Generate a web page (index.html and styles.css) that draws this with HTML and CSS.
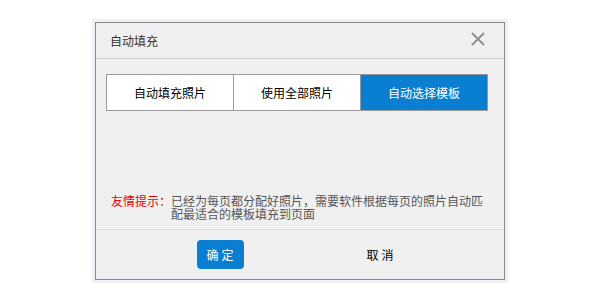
FILE: index.html
```html
<!DOCTYPE html>
<html lang="zh-CN">
<head>
    <meta charset="UTF-8">
    <meta name="viewport" content="width=device-width, initial-scale=1.0">
    <title>自动填充</title>
    <link rel="stylesheet" href="styles.css">
</head>
<body>
    <div class="frame">
        <div class="dialog">
            <div class="header">
                <span class="title">自动填充</span>
                <a href="#" class="close">
                    <svg width="14" height="14" viewBox="0 0 14 14">
                        <path d="M1 1 L13 13 M13 1 L1 13" stroke="#8c8c8c" stroke-width="1.8" fill="none"/>
                    </svg>
                </a>
            </div>
            <div class="body">
                <div class="tabs">
                    <div class="tab">自动填充照片</div>
                    <div class="tab">使用全部照片</div>
                    <div class="tab active">自动选择模板</div>
                </div>
                <div class="tip">
                    <span class="tip-label">友情提示：</span>
                    <span class="tip-text">已经为每页都分配好照片，需要软件根据每页的照片自动匹配最适合的模板填充到页面</span>
                </div>
            </div>
            <div class="footer">
                <a href="#" class="button primary">确定</a>
                <a href="#" class="button">取消</a>
            </div>
        </div>
    </div>
</body>
</html>
```

FILE: styles.css
```css
body {
    font-family: "Noto Sans CJK SC", "Liberation Sans", sans-serif;
    font-size: 12px;
    background-color: #FFFFFF;
    color: #000000;
    margin: 0;
    padding: 0;
}
a {
    text-decoration: none;
    color: inherit;
}
.frame {
    width: 410px;
    margin: 19px 0 0 92px;
    padding: 3px;
    background-color: #eef2f8;
}
.dialog {
    border: 1px solid #888888;
    background-color: #f0f0f0;
}
.header {
    height: 35px;
    border-bottom: 1px solid #cccccc;
    display: flex;
    align-items: center;
    justify-content: space-between;
    padding: 0 19px 0 14px;
    color: #333333;
}
.close {
    display: flex;
    margin-top: -4px;
}
.body {
    height: 170px;
    padding: 15px 16px 0 10px;
    box-sizing: border-box;
}
.tabs {
    display: flex;
    border: 1px solid #999999;
    height: 37px;
    box-sizing: border-box;
    background-color: #FFFFFF;
}
.tab {
    flex: 1;
    display: flex;
    align-items: center;
    justify-content: center;
    border-left: 1px solid #999999;
    color: #000000;
}
.tab:first-child {
    border-left: none;
}
.tab.active {
    background-color: #0a7fd2;
    color: #FFFFFF;
}
.tip {
    display: flex;
    margin: 83px 0 0 5px;
    line-height: 13px;
}
.tip-label {
    color: #ee0000;
    flex-shrink: 0;
}
.tip-text {
    color: #555555;
    width: 313px;
}
.footer {
    height: 50px;
    border-top: 1px solid #dddddd;
    display: flex;
    justify-content: center;
    gap: 113px;
    padding-top: 10px;
    box-sizing: border-box;
}
.button {
    width: 47px;
    height: 29px;
    display: flex;
    align-items: center;
    justify-content: center;
    letter-spacing: 3px;
    text-indent: 3px;
    border-radius: 4px;
}
.button.primary {
    background-color: #0a7fd2;
    color: #FFFFFF;
}
```
